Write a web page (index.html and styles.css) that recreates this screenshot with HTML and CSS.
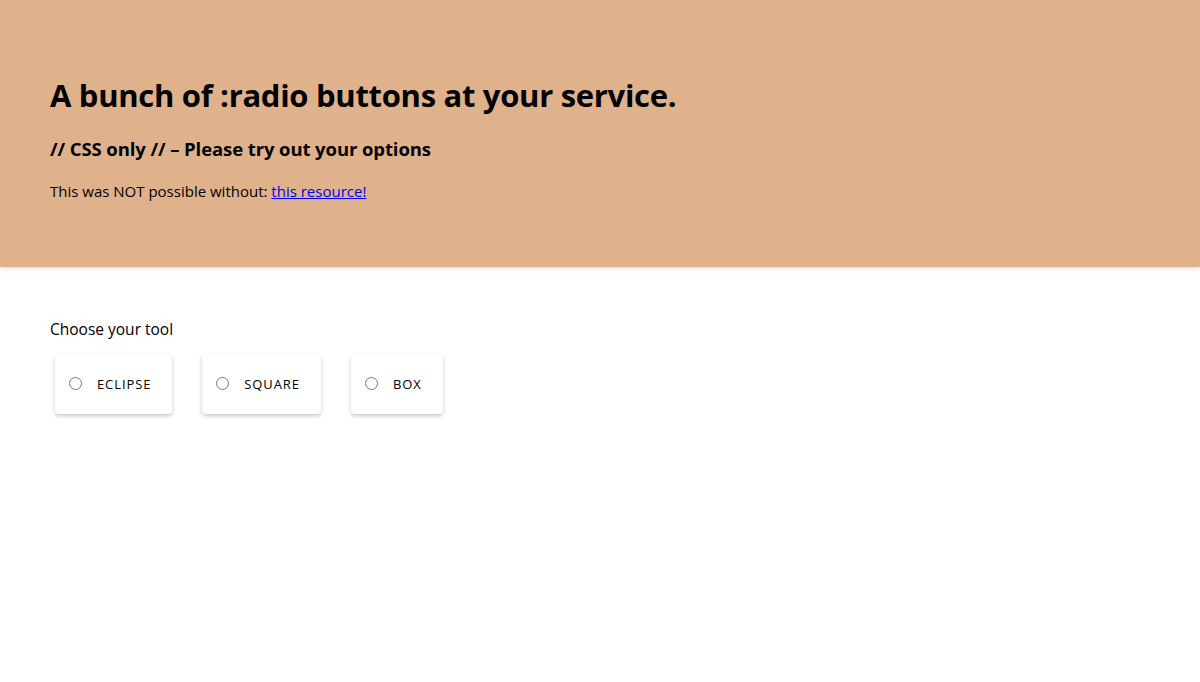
FILE: index.html
```html
<!DOCTYPE html>
<html>
<head>
<meta charset="utf-8">
<link rel="stylesheet" href="styles.css">
</head>
<body>
<header class="hero">
  <h1 class="hero-title">A bunch of :radio buttons at your service.</h1>
  <h3 class="hero-sub">// CSS only // – Please try out your options</h3>
  <p class="hero-text">This was NOT possible without: <a href="#" class="hero-link">this resource!</a></p>
</header>
<main class="content">
  <p class="label">Choose your tool</p>
  <div class="options">
    <label class="card"><input type="radio" name="tool" class="radio"><span class="card-text">ECLIPSE</span></label>
    <label class="card"><input type="radio" name="tool" class="radio"><span class="card-text">SQUARE</span></label>
    <label class="card"><input type="radio" name="tool" class="radio"><span class="card-text">BOX</span></label>
  </div>
</main>
</body>
</html>
```
FILE: styles.css
```css
* { box-sizing: border-box; }
html, body { margin: 0; padding: 0; }
body {
  font-family: "Open Sans", "Noto Sans", sans-serif;
  color: #000;
  background: #fff;
}
.hero {
  background: #e0b28c;
  height: 267px;
  padding: 74px 50px 0;
  box-shadow: 0 2px 5px rgba(0,0,0,0.12);
  position: relative;
}
.hero-title {
  margin: 0;
  font-size: 31px;
  line-height: 42px;
  font-weight: 700;
  letter-spacing: -0.3px;
}
.hero-sub {
  margin: 20px 0 0;
  font-size: 18.5px;
  line-height: 26px;
  font-weight: 700;
  letter-spacing: -0.1px;
}
.hero-text {
  margin: 17px 0 0;
  font-size: 15px;
  line-height: 24px;
}
.hero-link { color: #0000ee; }
.content {
  padding: 50px 50px;
}
.label {
  margin: 0;
  font-size: 15.5px;
  line-height: 24px;
}
.options {
  display: flex;
  gap: 30px;
  margin-top: 13px;
  padding-left: 5px;
}
.card {
  display: flex;
  align-items: center;
  height: 60px;
  padding: 0 21px 0 9px;
  background: #fff;
  border-radius: 4px;
  box-shadow: 0 2px 4px rgba(0,0,0,0.22);
}
.radio {
  width: 13px;
  height: 13px;
  margin: 0 15px 0 5px;
  position: relative;
  top: -1px;
}
.card-text {
  font-size: 13px;
  letter-spacing: 0.9px;
}
```
